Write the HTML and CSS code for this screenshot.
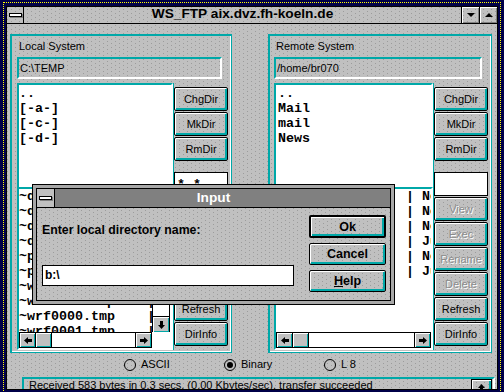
FILE: index.html
```html
<!DOCTYPE html>
<html>
<head>
    <title>WS_FTP</title>
    <link rel="stylesheet" href="styles.css">
</head>
<body>
<div class="window">
    <div class="frame">
        <div class="main">
            <div class="titlebar">
                <div class="sysbox"><span class="dash"></span></div>
                <div class="caption">WS_FTP aix.dvz.fh-koeln.de</div>
                <div class="tbtn"><span class="tri-down"></span></div>
                <div class="tbtn"><span class="tri-up"></span></div>
            </div>

            <div class="client">
                <div class="groups">
                    <!-- local side -->
                    <div class="group">
                        <div class="group-label">Local System</div>
                        <div class="path">C:\TEMP</div>
                        <div class="panel">
                            <div class="lists">
                                <div class="dirlist">
                                    <div class="item">..</div>
                                    <div class="item">[-a-]</div>
                                    <div class="item">[-c-]</div>
                                    <div class="item">[-d-]</div>
                                </div>
                                <div class="filelist">
                                    <div class="rows">
                                        <div class="item">~df0a12.tmp     |      0 Nov 14</div>
                                        <div class="item">~df1b40.tmp     |   2048 Nov 14</div>
                                        <div class="item">~df2c07.tmp     |      0 Nov 15</div>
                                        <div class="item">~df3e91.tmp     |   1024 Nov 15</div>
                                        <div class="item">~prn0001.tmp    |    512 Nov 18</div>
                                        <div class="item">~prn0002.tmp    |    512 Nov 18</div>
                                        <div class="item">~wrd0000.tmp    |   4096 Nov 19</div>
                                        <div class="item">~wrd0001.tmp    |   4096 Nov 19</div>
                                        <div class="item">~wrf0000.tmp    |   6144 Nov 20</div>
                                        <div class="item">~wrf0001.tmp    |   6144 Nov 20</div>
                                    </div>
                                    <div class="vscroll">
                                        <div class="sbox sbox-bottom">
                                            <svg width="7" height="8" viewBox="0 0 7 8"><polygon points="2,0 5,0 5,4 7,4 3.5,8 0,4 2,4"/></svg>
                                        </div>
                                    </div>
                                    <div class="hscroll">
                                        <div class="sbox">
                                            <svg width="8" height="7" viewBox="0 0 8 7"><polygon points="0,3.5 4,0 4,2 8,2 8,5 4,5 4,7"/></svg>
                                        </div>
                                        <div class="sbox"></div>
                                        <div class="track"></div>
                                        <div class="sbox sbox-end">
                                            <svg width="8" height="7" viewBox="0 0 8 7"><polygon points="8,3.5 4,0 4,2 0,2 0,5 4,5 4,7"/></svg>
                                        </div>
                                    </div>
                                </div>
                            </div>
                            <div class="buttons">
                                <div class="btn">ChgDir</div>
                                <div class="btn">MkDir</div>
                                <div class="btn">RmDir</div>
                                <div class="filter">*.*</div>
                                <div class="btn">View</div>
                                <div class="btn">Exec</div>
                                <div class="btn">Rename</div>
                                <div class="btn">Delete</div>
                                <div class="btn">Refresh</div>
                                <div class="btn">DirInfo</div>
                            </div>
                        </div>
                    </div>

                    <!-- remote side -->
                    <div class="group group-remote">
                        <div class="group-label">Remote System</div>
                        <div class="path">/home/br070</div>
                        <div class="panel">
                            <div class="lists">
                                <div class="dirlist dirlist-remote">
                                    <div class="item">..</div>
                                    <div class="item">Mail</div>
                                    <div class="item">mail</div>
                                    <div class="item">News</div>
                                </div>
                                <div class="filelist filelist-remote">
                                    <div class="rows rows-remote">
                                        <div class="item">.cshrc          | Nov 12 1996</div>
                                        <div class="item">.login          | Nov 12 1996</div>
                                        <div class="item">.profile        | Nov 12 1996</div>
                                        <div class="item">.xinitrc        | Jun 03 1996</div>
                                        <div class="item">index.html      | Nov 20 1996</div>
                                        <div class="item">ws_ftp.log      | Jun 17 1996</div>
                                    </div>
                                    <div class="hscroll">
                                        <div class="sbox">
                                            <svg width="8" height="7" viewBox="0 0 8 7"><polygon points="0,3.5 4,0 4,2 8,2 8,5 4,5 4,7"/></svg>
                                        </div>
                                        <div class="sbox"></div>
                                        <div class="track"></div>
                                        <div class="sbox sbox-end">
                                            <svg width="8" height="7" viewBox="0 0 8 7"><polygon points="8,3.5 4,0 4,2 0,2 0,5 4,5 4,7"/></svg>
                                        </div>
                                    </div>
                                </div>
                            </div>
                            <div class="buttons">
                                <div class="btn">ChgDir</div>
                                <div class="btn">MkDir</div>
                                <div class="btn">RmDir</div>
                                <div class="filter"></div>
                                <div class="btn btn-off">View</div>
                                <div class="btn btn-off">Exec</div>
                                <div class="btn btn-off">Rename</div>
                                <div class="btn btn-off">Delete</div>
                                <div class="btn">Refresh</div>
                                <div class="btn">DirInfo</div>
                            </div>
                        </div>
                    </div>
                </div>

                <div class="modes">
                    <div class="mode"><span class="radio"></span>ASCII</div>
                    <div class="mode"><span class="radio"><span class="radio-dot"></span></span>Binary</div>
                    <div class="mode"><span class="radio"></span>L 8</div>
                </div>

                <div class="status">
                    <div class="status-text">Received 583 bytes in 0.3 secs, (0.00 Kbytes/sec), transfer succeeded</div>
                    <div class="status-btn">
                        <svg width="7" height="8" viewBox="0 0 7 8"><polygon points="3.5,0 7,4 5,4 5,8 2,8 2,4 0,4"/></svg>
                    </div>
                </div>
            </div>
        </div>
    </div>

    <!-- modal input dialog -->
    <div class="dialog">
        <div class="dlg-inner">
            <div class="dlg-title">
                <div class="dlg-sys"><span class="dash"></span></div>
                <div class="dlg-caption">Input</div>
                <div></div>
            </div>
            <div class="dlg-body">
                <div class="dlg-left">
                    <div class="dlg-label">Enter local directory name:</div>
                    <div class="dlg-input">b:\</div>
                </div>
                <div class="dlg-buttons">
                    <div class="dbtn dbtn-default">Ok</div>
                    <div class="dbtn">Cancel</div>
                    <div class="dbtn"><u>H</u>elp</div>
                </div>
            </div>
        </div>
    </div>
</div>
</body>
</html>
```

FILE: styles.css
```css
body {
    margin: 0;
    width: 504px;
    height: 392px;
    overflow: hidden;
    background: #000048;
    font-family: "Liberation Sans", Arial, sans-serif;
    font-size: 11px;
    color: #000;
}

/* window frame */
.window {
    position: relative;
    padding: 2px 3px 0 3px;
}

.frame {
    border: 1px dotted #ffff00;
    padding: 3px 2px 2px 2px;
}

.main {
    border: 1px solid #000;
    height: 382px;
    overflow: hidden;
    background-color: #c0c0c0;
    background-image: radial-gradient(circle at 0.5px 0.5px, #9c9c9c 0.8px, transparent 0.8px),
                      radial-gradient(circle at 4.5px 2.5px, #9c9c9c 0.8px, transparent 0.8px);
    background-size: 8px 4px;
}

/* title bar */
.titlebar {
    display: flex;
    height: 16px;
    border-bottom: 1px solid #000;
}

.sysbox {
    width: 16px;
    border-right: 1px solid #000;
    display: flex;
    align-items: center;
    justify-content: center;
}

.dash {
    width: 11px;
    height: 2px;
    border: 1px solid #000;
    background: #fff;
    box-shadow: 1px 1px 0 #808080;
}

.caption {
    flex: 1;
    text-align: center;
    font-weight: bold;
    font-size: 13.7px;
    line-height: 14px;
}

.tbtn {
    width: 17px;
    border-left: 1px solid #000;
    box-shadow: inset 1px 1px 0 #fff, inset -1px -1px 0 #808080;
    display: flex;
    align-items: center;
    justify-content: center;
}

.tri-down {
    border-left: 4px solid transparent;
    border-right: 4px solid transparent;
    border-top: 4px solid #000;
}

.tri-up {
    border-left: 4px solid transparent;
    border-right: 4px solid transparent;
    border-bottom: 4px solid #000;
}

/* client area */
.client {
    padding: 10px 0 0 3px;
}

.groups {
    display: grid;
    grid-template-columns: 222px 224px;
    column-gap: 36px;
}

.group {
    height: 319px;
    box-sizing: border-box;
    border: 1px solid #00a8a8;
    box-shadow: inset 1px 1px 0 #00a8a8, inset -1px -1px 0 #fff;
    padding: 5px 3px 2px 6px;
    display: flex;
    flex-direction: column;
}

.group-remote {
    padding-left: 5px;
}

.group-label {
    line-height: 13px;
    margin-left: 2px;
    margin-bottom: 4px;
}

.path {
    height: 22px;
    box-sizing: border-box;
    margin-right: 6px;
    border: 2px solid #fff;
    border-top-color: #00a8a8;
    border-left-color: #00a8a8;
    padding-left: 1px;
    line-height: 18px;
}

.panel {
    display: flex;
    gap: 1px;
    height: 267px;
    margin-top: 4px;
}

.lists {
    flex: 1;
    min-width: 0;
    display: flex;
    flex-direction: column;
}

.dirlist,
.rows,
.filter {
    font-family: "Liberation Mono", "Courier New", monospace;
    font-weight: bold;
    font-size: 13.33px;
    line-height: 15px;
}

.item {
    white-space: pre;
    height: 15px;
}

.dirlist {
    height: 104px;
    box-sizing: border-box;
    background: #fff;
    border-top: 2px solid #00a8a8;
    border-left: 2px solid #00a8a8;
    border-right: 2px solid #fff;
    box-shadow: 1px 0 0 #00a8a8;
    padding-top: 1px;
}

.dirlist-remote {
    padding-left: 2px;
}

.filelist {
    flex: 1;
    min-height: 0;
    box-sizing: border-box;
    background: #fff;
    border: 2px solid #fff;
    border-top-color: #00a8a8;
    border-left-color: #00a8a8;
    box-shadow: 1px 0 0 #00a8a8;
    display: grid;
    grid-template-columns: 133px 18px 1fr;
    grid-template-rows: 143px 16px;
}

.filelist-remote {
    grid-template-columns: 1fr;
}

.rows {
    overflow: hidden;
}

.rows-remote {
    padding-left: 2px;
}

/* scroll bars */
.vscroll {
    border: 1px solid #000;
    border-bottom: none;
    display: flex;
    flex-direction: column;
    justify-content: flex-end;
}

.hscroll {
    grid-column: 1;
    display: flex;
    border: 1px solid #000;
    background: #fff;
}

.sbox {
    width: 15px;
    border-right: 1px solid #000;
    background: #c0c0c0;
    box-shadow: inset 1px 1px 0 #fff, inset -1px -1px 0 #00a8a8;
    display: flex;
    align-items: center;
    justify-content: center;
}

.sbox-end {
    border-right: none;
    border-left: 1px solid #000;
}

.sbox-bottom {
    width: auto;
    height: 15px;
    border-right: none;
    border-top: 1px solid #000;
}

.track {
    flex: 1;
}

/* buttons */
.buttons {
    width: 54px;
    flex-shrink: 0;
    padding-top: 4px;
}

.btn,
.dbtn,
.status-btn {
    box-sizing: border-box;
    border: 1px solid #000;
    border-radius: 2px;
    background-color: #c0c0c0;
    background-image: radial-gradient(circle at 0.5px 0.5px, #9c9c9c 0.8px, transparent 0.8px),
                      radial-gradient(circle at 4.5px 2.5px, #9c9c9c 0.8px, transparent 0.8px);
    background-size: 8px 4px;
    box-shadow: inset 1px 1px 0 #fff, inset -2px -2px 0 #00a8a8;
    display: flex;
    align-items: center;
    justify-content: center;
}

.btn {
    height: 24px;
    margin-bottom: 1px;
}

.btn-off {
    color: #8c8c8c;
    text-shadow: 1px 1px 0 #fff;
}

.filter {
    height: 24px;
    box-sizing: border-box;
    margin: 11px 0 1px;
    border: 1px solid #000;
    background: #fff;
    padding: 4px 0 0 2px;
}

/* transfer mode */
.modes {
    display: flex;
    height: 13px;
    margin-top: 5px;
    padding-left: 114px;
}

.mode {
    width: 100px;
    display: flex;
    align-items: center;
    gap: 5px;
    line-height: 13px;
}

.radio {
    width: 12px;
    height: 12px;
    box-sizing: border-box;
    border: 1px solid #000;
    border-radius: 50%;
    display: flex;
    align-items: center;
    justify-content: center;
}

.radio-dot {
    width: 6px;
    height: 6px;
    border-radius: 50%;
    background: #000;
}

/* status line */
.status {
    display: flex;
    width: 473px;
    height: 30px;
    box-sizing: border-box;
    margin: 6px 0 0 12px;
    border: 2px solid #fff;
    border-top-color: #00a8a8;
    border-left-color: #00a8a8;
}

.status-text {
    flex: 1;
    padding-left: 5px;
    line-height: 13px;
    white-space: nowrap;
}

.status-btn {
    width: 21px;
    height: 17px;
    margin-right: 1px;
    border-radius: 0;
}

/* input dialog */
.dialog {
    position: absolute;
    left: 32px;
    top: 184px;
    width: 363px;
    box-sizing: border-box;
    border: 1px solid #000;
    padding: 3px;
    background: #a8a8a8;
}

.dlg-inner {
    border: 1px solid #000;
}

.dlg-title {
    display: grid;
    grid-template-columns: 18px 1fr 18px;
    height: 18px;
    background: #808080;
    border-bottom: 1px solid #000;
}

.dlg-sys {
    border-right: 1px solid #000;
    background: #c0c0c0;
    display: flex;
    align-items: center;
    justify-content: center;
}

.dlg-caption {
    color: #fff;
    font-weight: bold;
    font-size: 13.7px;
    line-height: 18px;
    text-align: center;
}

.dlg-body {
    display: flex;
    height: 92px;
    background-color: #c0c0c0;
    background-image: radial-gradient(circle at 0.5px 0.5px, #9c9c9c 0.8px, transparent 0.8px),
                      radial-gradient(circle at 4.5px 2.5px, #9c9c9c 0.8px, transparent 0.8px);
    background-size: 8px 4px;
}

.dlg-left {
    flex: 1;
    padding: 15px 0 0 5px;
}

.dlg-label {
    font-weight: bold;
    font-size: 12.3px;
    line-height: 14px;
}

.dlg-input {
    margin-top: 28px;
    width: 252px;
    height: 21px;
    box-sizing: border-box;
    border: 1px solid #000;
    background: #fff;
    padding-left: 2px;
    font-weight: bold;
    font-size: 12px;
    line-height: 19px;
}

.dlg-buttons {
    width: 77px;
    margin-right: 4px;
    padding-top: 7px;
}

.dbtn {
    height: 22px;
    margin-bottom: 5px;
    font-weight: bold;
    font-size: 12.5px;
}

.dbtn-default {
    height: 23px;
    border-width: 2px;
}
```
